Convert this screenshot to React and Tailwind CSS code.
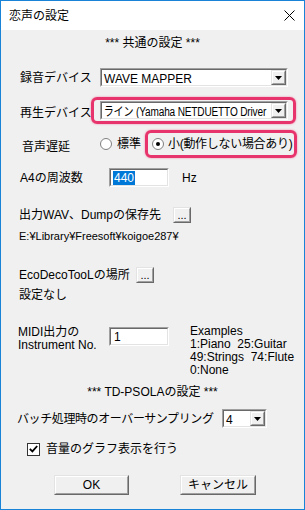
import React from 'react';

const font = "font-['Liberation_Sans','Noto_Sans_CJK_JP',sans-serif]";

function Sunken({ className = '', children }) {
  return (
    <div className={`border border-t-[#a0a0a0] border-l-[#a0a0a0] border-r-white border-b-white ${className}`}>
      <div className="flex h-full items-center overflow-hidden border border-t-[#696969] border-l-[#696969] border-r-[#e3e3e3] border-b-[#e3e3e3] bg-white">
        {children}
      </div>
    </div>
  );
}

function Raised({ className = '', children }) {
  return (
    <div className={`border border-t-[#e3e3e3] border-l-[#e3e3e3] border-r-[#696969] border-b-[#696969] ${className}`}>
      <div className="flex h-full items-center justify-center border border-t-white border-l-white border-r-[#a0a0a0] border-b-[#a0a0a0] bg-[#f0f0f0]">
        {children}
      </div>
    </div>
  );
}

function Arrow() {
  return (
    <svg width="7" height="4" viewBox="0 0 7 4">
      <path d="M0 0h7L3.5 4z" fill="#000" />
    </svg>
  );
}

function Combo({ text, className = '', tight = false }) {
  return (
    <Sunken className={`h-[19px] shrink-0 ${className}`}>
      <div className="min-w-0 flex-1 overflow-hidden">
        <span
          className={`inline-block origin-left whitespace-nowrap pl-[2px] text-[12px] leading-none ${
            tight ? 'scale-x-[0.84] tracking-[-0.2px]' : ''
          }`}
        >
          {text}
        </span>
      </div>
      <Raised className="h-[15px] w-[15px] shrink-0">
        <Arrow />
      </Raised>
    </Sunken>
  );
}

function Radio({ checked }) {
  return (
    <div className="flex h-[12px] w-[12px] shrink-0 items-center justify-center rounded-full border border-[#808080] bg-white">
      {checked && <div className="h-[4px] w-[4px] rounded-full bg-black" />}
    </div>
  );
}

const pink = 'rounded-[6px] border-[3px] border-[#e8346c] shadow-[0_0_2px_#f07ca0]';

export default function App() {
  return (
    <div className={`flex h-[510px] w-[305px] flex-col border border-[#1883d7] bg-[#f0f0f0] text-black ${font}`}>
      <div className="flex h-[29px] shrink-0 items-center justify-between bg-white pl-[8px] pr-[9px]">
        <span className="text-[12px]">恋声の設定</span>
        <svg width="11" height="11" viewBox="0 0 11 11">
          <path d="M0.5 0.5l10 10M10.5 0.5l-10 10" stroke="#000" strokeWidth="1" />
        </svg>
      </div>

      <div className="mt-[6px] flex h-[14px] items-center justify-center text-[12px]">*** 共通の設定 ***</div>

      <div className="mt-[18px] flex h-[19px] items-center">
        <span className="ml-[19px] w-[80px] shrink-0 whitespace-nowrap text-[12px]">録音デバイス</span>
        <Combo text="WAVE MAPPER" className="w-[188px]" />
      </div>

      <div className="mt-[10px] flex items-center">
        <span className="ml-[19px] mt-[4px] w-[71px] shrink-0 whitespace-nowrap text-[12px]">再生デバイス</span>
        <div className={`${pink} shrink-0 py-[1px] pl-[6px] pr-[5px]`}>
          <Combo text="ライン (Yamaha NETDUETTO Driver" className="w-[188px]" tight />
        </div>
      </div>

      <div className="mt-[6px] flex items-center">
        <span className="ml-[21px] mt-[6px] w-[78px] shrink-0 whitespace-nowrap text-[12px]">音声遅延</span>
        <Radio />
        <span className="ml-[5px] w-[28px] shrink-0 whitespace-nowrap text-[12px]">標準</span>
        <div className={`${pink} flex h-[28px] shrink-0 items-center pl-[4px] pr-[2px]`}>
          <Radio checked />
          <span className="ml-[4px] whitespace-nowrap text-[12px] tracking-[-0.3px]">小(動作しない場合あり)</span>
        </div>
      </div>

      <div className="mt-[10px] flex h-[19px] items-center">
        <span className="ml-[19px] w-[89px] shrink-0 whitespace-nowrap text-[12px]">A4の周波数</span>
        <Sunken className="h-[19px] w-[60px] shrink-0">
          <span className="ml-[2px] bg-[#0078d7] px-[1px] text-[12px] leading-[14px] text-white">440</span>
        </Sunken>
        <span className="ml-[13px] text-[12px]">Hz</span>
      </div>

      <div className="mt-[20px] flex h-[16px] items-center">
        <span className="ml-[18px] w-[154px] shrink-0 whitespace-nowrap text-[12px]">出力WAV、Dumpの保存先</span>
        <Raised className="h-[16px] w-[18px]">
          <span className="text-[11px] leading-none">...</span>
        </Raised>
      </div>

      <div className="ml-[18px] mt-[7px] flex h-[12px] items-center text-[11px]">E:¥Library¥Freesoft¥koigoe287¥</div>

      <div className="mt-[25px] flex h-[16px] items-center">
        <span className="ml-[18px] w-[117px] shrink-0 whitespace-nowrap text-[12px]">EcoDecoTooLの場所</span>
        <Raised className="h-[16px] w-[18px]">
          <span className="text-[11px] leading-none">...</span>
        </Raised>
      </div>

      <div className="ml-[18px] mt-[5px] flex h-[14px] items-center text-[12px]">設定なし</div>

      <div className="mt-[23px] flex h-[52px] items-start">
        <div className="ml-[17px] mt-[1px] w-[91px] shrink-0 text-[12px] leading-[13px]">
          <div>MIDI出力の</div>
          <div>Instrument No.</div>
        </div>
        <Sunken className="mt-[2px] h-[19px] w-[60px] shrink-0">
          <span className="ml-[3px] text-[12px] leading-none">1</span>
        </Sunken>
        <div className="ml-[21px] whitespace-nowrap text-[12px] leading-[13px]">
          <div>Examples</div>
          <div>1:Piano&nbsp;&nbsp;25:Guitar</div>
          <div>49:Strings&nbsp;&nbsp;74:Flute</div>
          <div>0:None</div>
        </div>
      </div>

      <div className="mt-[8px] flex h-[14px] items-center justify-center text-[12px]">*** TD-PSOLAの設定 ***</div>

      <div className="mt-[10px] flex h-[19px] items-center">
        <span className="ml-[16px] w-[205px] shrink-0 whitespace-nowrap text-[12px] tracking-[-0.4px]">バッチ処理時のオーバーサンプリング</span>
        <Combo text="4" className="w-[45px]" />
      </div>

      <div className="mt-[14px] flex h-[14px] items-center">
        <div className="ml-[26px] flex h-[13px] w-[13px] shrink-0 items-center justify-center border border-[#333] bg-white">
          <svg width="9" height="8" viewBox="0 0 9 8">
            <path d="M0.8 3.8l2.6 2.6L8.2 1" fill="none" stroke="#000" strokeWidth="1.8" />
          </svg>
        </div>
        <span className="ml-[6px] text-[12px]">音量のグラフ表示を行う</span>
      </div>

      <div className="mt-[19px] flex h-[20px] items-center">
        <Raised className="ml-[53px] h-[20px] w-[75px] shrink-0">
          <span className="text-[12px]">OK</span>
        </Raised>
        <Raised className="ml-[51px] h-[20px] w-[76px] shrink-0">
          <span className="text-[12px]">キャンセル</span>
        </Raised>
      </div>
    </div>
  );
}
